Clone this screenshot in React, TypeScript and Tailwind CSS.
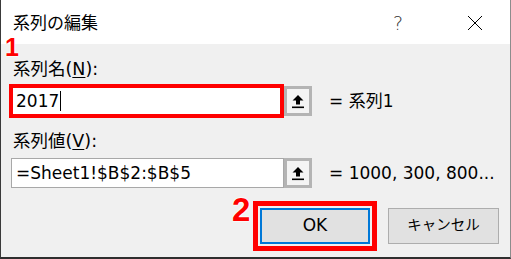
import React from 'react'

const font = "font-['DejaVu_Sans','Noto_Sans_CJK_JP',sans-serif]"

function RefButton() {
    return (
        <div className="w-[28px] h-[30px] border-[3px] border-[#b4b4b4] bg-[#f4f4f4] flex items-center justify-center shrink-0">
            <svg width="12" height="15" viewBox="0 0 12 15">
                <path d="M6 1 L11.5 6.5 L8 6.5 L8 10.5 L4 10.5 L4 6.5 L0.5 6.5 Z" fill="#000" />
                <rect x="0" y="12.5" width="12" height="1.6" fill="#000" />
            </svg>
        </div>
    )
}

export default function App() {
    return (
        <div className={`${font} relative w-[511px] h-[259px] flex flex-col border-l border-l-[#3a3a3a] border-r border-r-[#8c8c8c] border-b-2 border-b-[#2e2e2e] text-black`}>
            {/* Title bar */}
            <div className="h-[44px] bg-white flex items-center pt-[2px] shrink-0">
                <span className="ml-[12px] text-[17px] leading-none">系列の編集</span>
                <span className="ml-auto text-[19px] leading-none font-light text-[#333] mr-[64px]">?</span>
                <svg width="16" height="16" viewBox="0 0 16 16" className="mr-[27px]">
                    <path d="M1 1 L15 15 M15 1 L1 15" stroke="#000" strokeWidth="1" />
                </svg>
            </div>

            {/* Body */}
            <div className="flex-1 bg-[#f0f0f0] flex flex-col">
                <div className="mt-[15px] ml-[12px] h-[20px] leading-[20px] text-[17.5px]">
                    系列名(<span className="underline underline-offset-2">N</span>):
                </div>

                <div className="mt-[5px] flex items-center">
                    <div className="ml-[8px] w-[275px] h-[34px] border-4 border-[#ff0000] bg-white flex items-center pl-[3px] shrink-0">
                        <span className="text-[17px] leading-none">2017</span>
                        <span className="ml-[1px] w-px h-[20px] bg-black" />
                    </div>
                    <RefButton />
                    <span className="ml-[17px] text-[17px] leading-none">= 系列1</span>
                </div>

                <div className="mt-[13px] ml-[12px] h-[20px] leading-[20px] text-[17.5px]">
                    系列値(<span className="underline underline-offset-2">V</span>):
                </div>

                <div className="mt-[7px] flex items-center">
                    <div className="ml-[10px] w-[273px] h-[30px] border border-[#a8a8a8] bg-white flex items-center pl-[4px] shrink-0">
                        <span className="text-[17px] leading-none">=Sheet1!$B$2:$B$5</span>
                    </div>
                    <RefButton />
                    <span className="ml-[17px] text-[17px] leading-none whitespace-nowrap">= 1000, 300, 800...</span>
                </div>

                <div className="mt-[13px] flex items-start pl-[252px]">
                    <div className="border-[5px] border-[#ff0000] p-[2px] shrink-0">
                        <button className="w-[110px] h-[36px] border-2 border-[#0078d7] bg-[#e1e1e1] flex items-center justify-center text-[17px]">
                            OK
                        </button>
                    </div>
                    <button className="ml-[11px] mt-[7px] w-[111px] h-[36px] border border-[#adadad] bg-[#e1e1e1] flex items-center justify-center text-[14.5px]">
                        キャンセル
                    </button>
                </div>
            </div>

            {/* Annotation numbers */}
            <span className="absolute left-[4px] top-[35px] font-['Liberation_Sans',sans-serif] font-bold text-[25px] leading-none text-[#ff0000] [text-shadow:0_0_2px_#fff,0_0_2px_#fff,0_0_2px_#fff]">
                1
            </span>
            <span className="absolute left-[231px] top-[193px] font-['Liberation_Sans',sans-serif] font-bold text-[33px] leading-none text-[#ff0000] [text-shadow:0_0_2px_#fff,0_0_2px_#fff,0_0_2px_#fff]">
                2
            </span>
        </div>
    )
}
